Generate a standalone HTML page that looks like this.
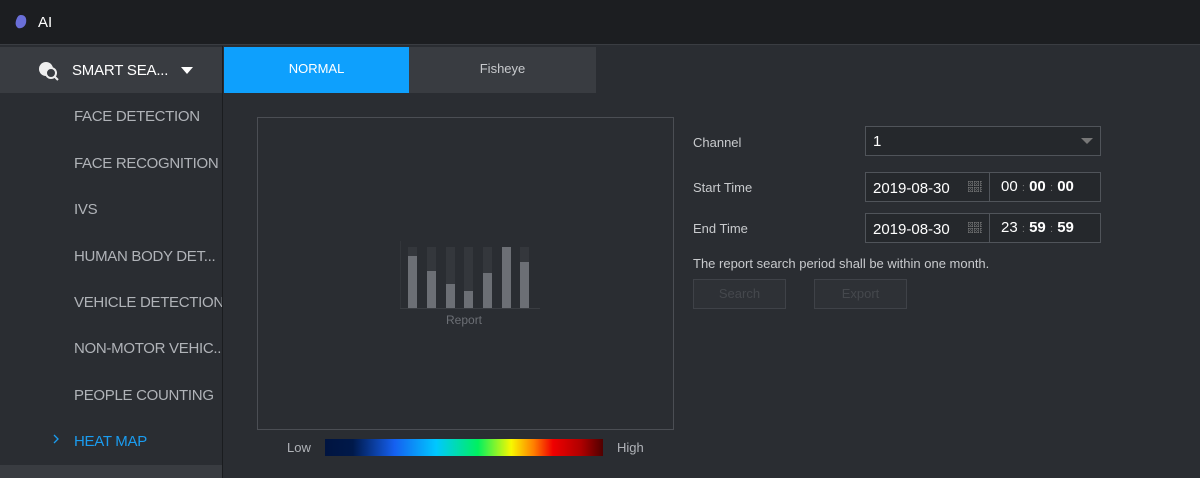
<!DOCTYPE html>
<html><head><style>
*{margin:0;padding:0;box-sizing:border-box}
body{width:1200px;height:478px;background:#2a2d32;font-family:"Liberation Sans",sans-serif;position:relative;overflow:hidden}
.a{position:absolute}
.top{left:0;top:0;width:1200px;height:45px;background:#1c1e21;border-bottom:1px solid #3a3d42}
.side{left:0;top:46px;width:223px;height:432px;background:#2a2d32;border-right:1px solid #1a1c1f}
.item{position:absolute;left:74px;color:#b0b3b8;font-size:15px;letter-spacing:-0.3px;white-space:nowrap;width:148px;overflow:hidden}
.lbl{color:#c8cacd;font-size:13px}
.box{position:absolute;border:1px solid #50545a;background:#25282c;color:#fff;font-size:15px}
.btn{position:absolute;border:1px solid #3f4248;background:#2e3136;color:#45484d;font-size:13px;text-align:center;line-height:28px}
.bar{position:absolute;width:9px;background:#34373c;top:247px;height:61px}
.bar i{position:absolute;left:0;bottom:0;width:9px;background:#6c6f75}
</style></head><body>
<div class="a top">
<svg class="a" style="left:14px;top:14px" width="14" height="16"><path d="M7 1C11 1 13 4 12 9C11 13 7 15 4 14C1 12 1 8 3 4C4 2 5 1 7 1Z" fill="#6a6fd8"/></svg>
<div class="a" style="left:38px;top:14px;color:#fff;font-size:15px">AI</div>
</div>
<div class="a side"></div>
<div class="a" style="left:0;top:47px;width:222px;height:46px;background:#393c41"></div>
<svg class="a" style="left:37px;top:61px" width="24" height="20"><circle cx="9" cy="8" r="7" fill="#eee"/><circle cx="14" cy="12" r="5" fill="#393c41" stroke="#eee" stroke-width="2"/><path d="M17 15L21 19" stroke="#eee" stroke-width="2"/></svg>
<div class="a" style="left:72px;top:62px;color:#fff;font-size:15px;letter-spacing:-0.2px">SMART SEA...</div>
<svg class="a" style="left:181px;top:67px" width="12" height="8"><path d="M0 0H12L6 7Z" fill="#fff"/></svg>
<div class="item" style="top:108px">FACE DETECTION</div>
<div class="item" style="top:155px">FACE RECOGNITION</div>
<div class="item" style="top:201px">IVS</div>
<div class="item" style="top:248px">HUMAN BODY DET...</div>
<div class="item" style="top:294px">VEHICLE DETECTION</div>
<div class="item" style="top:340px">NON-MOTOR VEHIC...</div>
<div class="item" style="top:387px">PEOPLE COUNTING</div>
<div class="item" style="top:433px;color:#1a9cf0">HEAT MAP</div>
<svg class="a" style="left:53px;top:434px" width="7" height="10"><path d="M1 1L5 5L1 9" stroke="#1a9cf0" stroke-width="1.3" fill="none"/></svg>
<div class="a" style="left:0;top:465px;width:222px;height:13px;background:#393c41"></div>
<div class="a" style="left:224px;top:47px;width:185px;height:46px;background:#0ea0fd;color:#fff;font-size:13px;text-align:center;line-height:44px">NORMAL</div>
<div class="a" style="left:409px;top:47px;width:187px;height:46px;background:#393c41;color:#c8cacd;font-size:13px;text-align:center;line-height:44px">Fisheye</div>
<div class="a" style="left:257px;top:117px;width:417px;height:313px;border:1px solid #4b4e54"></div>
<div class="a" style="left:400px;top:241px;width:1px;height:67px;background:#33363b"></div>
<div class="a" style="left:400px;top:308px;width:140px;height:1px;background:#3a3d42"></div>
<div class="bar" style="left:408px"><i style="height:52px"></i></div>
<div class="bar" style="left:427px"><i style="height:37px"></i></div>
<div class="bar" style="left:446px"><i style="height:24px"></i></div>
<div class="bar" style="left:464px"><i style="height:17px"></i></div>
<div class="bar" style="left:483px"><i style="height:35px"></i></div>
<div class="bar" style="left:502px"><i style="height:61px"></i></div>
<div class="bar" style="left:520px"><i style="height:46px"></i></div>
<div class="a" style="left:446px;top:313px;color:#6c6f75;font-size:12px">Report</div>
<div class="a" style="left:287px;top:440px;color:#b0b3b8;font-size:13px">Low</div>
<div class="a" style="left:325px;top:439px;width:278px;height:17px;background:linear-gradient(90deg,#001440 0%,#00194a 10%,#1560f0 25%,#00c8ff 40%,#00f060 55%,#f8f800 67%,#ff8000 75%,#f00000 82%,#b00000 92%,#500000 100%)"></div>
<div class="a" style="left:617px;top:440px;color:#b0b3b8;font-size:13px">High</div>
<div class="a lbl" style="left:693px;top:135px">Channel</div>
<div class="a lbl" style="left:693px;top:180px">Start Time</div>
<div class="a lbl" style="left:693px;top:221px">End Time</div>
<div class="box" style="left:865px;top:126px;width:236px;height:30px;padding:6px 7px">1</div>
<svg class="a" style="left:1081px;top:138px" width="12" height="7"><path d="M0 0H12L6 6Z" fill="#777"/></svg>
<div class="box" style="left:865px;top:172px;width:125px;height:30px;padding:7px 7px">2019-08-30</div>
<div class="box" style="left:989px;top:172px;width:112px;height:30px;padding:5px 11px;font-size:15px">00 <span style="color:#777;font-size:11px">:</span> <b>00</b> <span style="color:#777;font-size:11px">:</span> <b>00</b></div>
<div class="box" style="left:865px;top:213px;width:125px;height:30px;padding:7px 7px">2019-08-30</div>
<div class="box" style="left:989px;top:213px;width:112px;height:30px;padding:5px 11px;font-size:15px">23 <span style="color:#777;font-size:11px">:</span> <b>59</b> <span style="color:#777;font-size:11px">:</span> <b>59</b></div>
<svg class="a" style="left:968px;top:181px" width="14" height="12"><path d="M0 1H14M0 4H14M0 7H14M0 10H14M1 0V12M4 0V12M7 0V12M10 0V12M13 0V12" stroke="#888" stroke-width="1" stroke-dasharray="1 1"/></svg>
<svg class="a" style="left:968px;top:222px" width="14" height="12"><path d="M0 1H14M0 4H14M0 7H14M0 10H14M1 0V12M4 0V12M7 0V12M10 0V12M13 0V12" stroke="#888" stroke-width="1" stroke-dasharray="1 1"/></svg>
<div class="a lbl" style="left:693px;top:256px">The report search period shall be within one month.</div>
<div class="btn" style="left:693px;top:279px;width:93px;height:30px">Search</div>
<div class="btn" style="left:814px;top:279px;width:93px;height:30px">Export</div>
</body></html>
